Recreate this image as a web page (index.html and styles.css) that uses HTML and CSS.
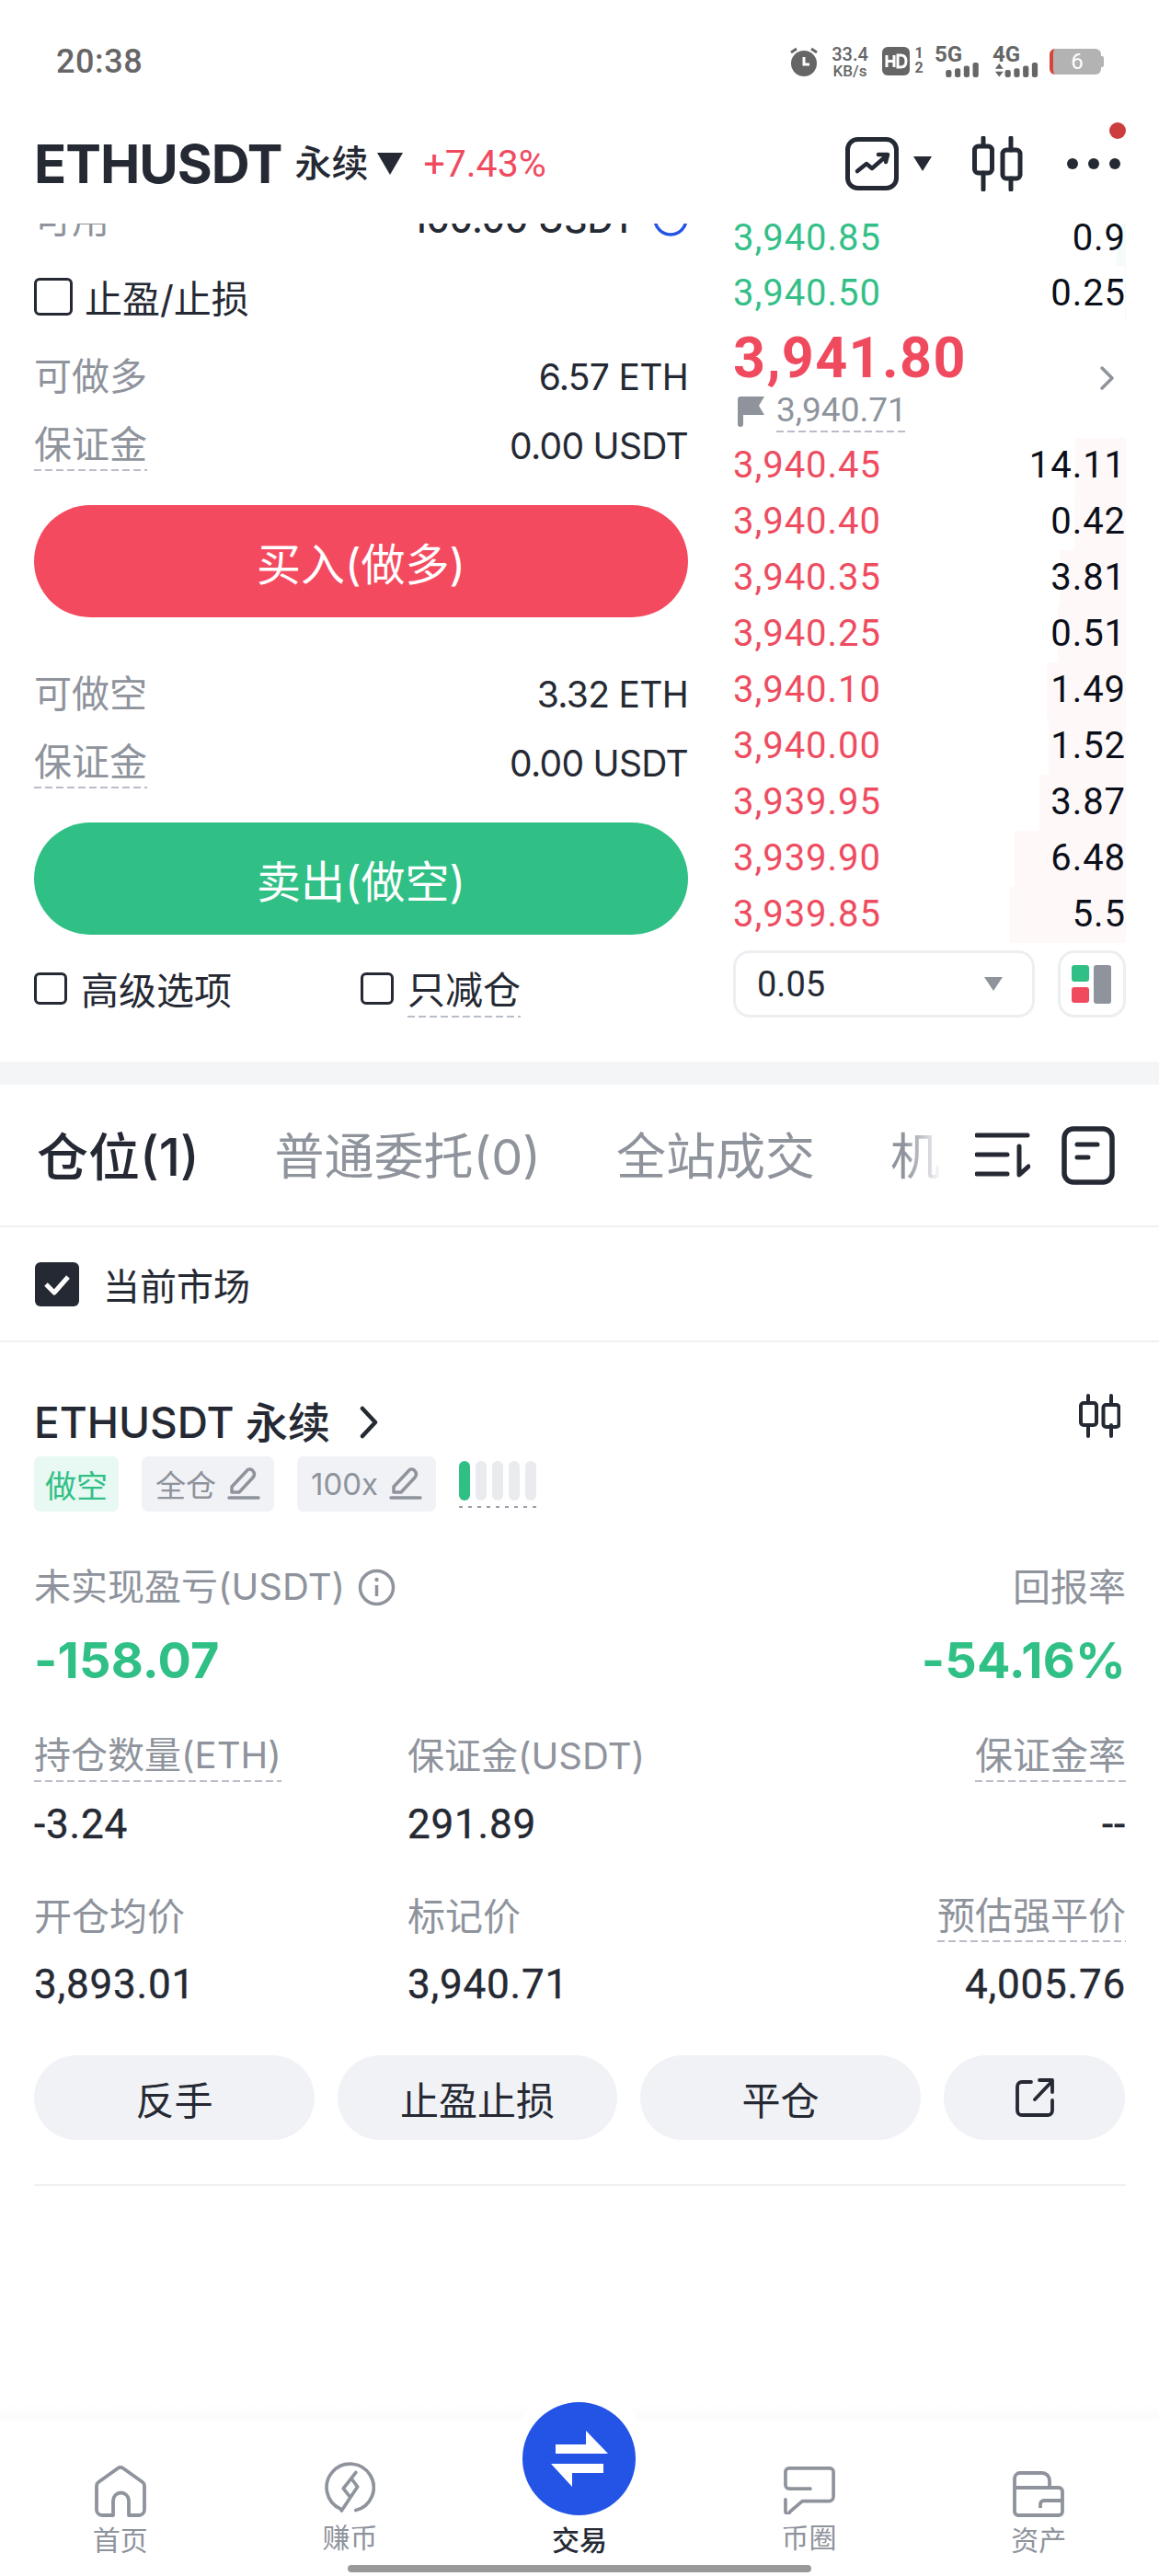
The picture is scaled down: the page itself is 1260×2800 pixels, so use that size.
FILE: index.html
```html
<!DOCTYPE html>
<html lang="zh-CN">
<head>
<meta charset="utf-8">
<title>ETHUSDT</title>
<link rel="stylesheet" href="styles.css">
</head>
<body>
<div class="page">
  <div class="status">
    <span class="time">20:38</span>
    <div class="sys">
      <svg class="i-alarm" viewBox="0 0 32 32"><circle cx="16" cy="18" r="14" fill="#666"/><path d="M16 11v8h6" fill="none" stroke="#fff" stroke-width="3"/><path d="M2 6l6-4M30 6l-6-4" stroke="#666" stroke-width="3"/></svg>
      <div class="speed"><span class="sp1">33.4</span><span class="sp2">KB/s</span></div>
      <svg class="i-hd" viewBox="0 0 30 31"><rect width="30" height="31" rx="6" fill="#666"/><path d="M5 9v13M13 9v13M5 15.500h8M17 9v13h3q6 0 6-6.500t-6-6.500z" fill="none" stroke="#fff" stroke-width="3"/></svg>
      <div class="sims"><span>1</span><span>2</span></div>
      <div class="net net5"><span class="net-t">5G</span><svg class="bars" viewBox="0 0 40 18"><rect y="9" width="7" height="9" rx="2.500"/><rect x="11" y="7" width="7" height="11" rx="2.500"/><rect x="22" y="4" width="7" height="14" rx="2.500"/><rect x="33" width="7" height="18" rx="2.500"/></svg></div>
      <div class="net net4"><span class="net-t">4G</span><svg class="bars2" viewBox="0 0 52 18"><path d="M0 7.500L5 1l5 6.500zM0 11h10l-5 6.500z"/><rect x="12" y="9" width="7" height="9" rx="2.500"/><rect x="23" y="7" width="7" height="11" rx="2.500"/><rect x="34" y="4" width="7" height="14" rx="2.500"/><rect x="45" width="7" height="18" rx="2.500"/></svg></div>
      <div class="battery"><span>6</span></div>
    </div>
  </div>

  <header class="head">
    <span class="sym">ETHUSDT</span>
    <span class="perp">永续</span>
    <span class="tri"></span>
    <span class="chg">+7.43%</span>
    <div class="head-tools">
      <svg class="i-chart" viewBox="0 0 58 58"><rect x="2.500" y="2.500" width="53" height="53" rx="11" fill="none" stroke="#252933" stroke-width="5"/><path d="M13 37l10-8 6 5 15-13M36 19l10 0-2 8" fill="none" stroke="#252933" stroke-width="4.500" stroke-linecap="round" stroke-linejoin="round"/></svg>
      <span class="tri tri-sm"></span>
      <svg class="i-candle" viewBox="0 0 56 60"><g fill="none" stroke="#252933" stroke-width="5" stroke-linecap="round"><path d="M13 2v8M13 40v18M43 2v13M43 46v12"/><rect x="3.500" y="11" width="19" height="29" rx="4"/><rect x="34" y="15" width="19" height="31" rx="4"/></g></svg>
      <div class="dots"><i></i><i></i><i></i><b class="reddot"></b></div>
    </div>
  </header>

  <section class="trade">
    <div class="form">
      <div class="row clipped"><span class="lbl">可用</span><span class="avail">100.00 USDT<svg class="i-plus" viewBox="0 0 38 38"><circle cx="19" cy="19" r="17" fill="none" stroke="#2354e6" stroke-width="3.500"/></svg></span></div>
      <label class="check-row tpsl"><span class="box box-lg"></span>止盈/止损</label>
      <div class="group">
        <div class="row"><span class="lbl">可做多</span><span class="val">6.57 ETH</span></div>
        <div class="row"><span class="lbl dash">保证金</span><span class="val">0.00 USDT</span></div>
      </div>
      <button class="cta buy">买入(做多)</button>
      <div class="group group2">
        <div class="row"><span class="lbl">可做空</span><span class="val">3.32 ETH</span></div>
        <div class="row"><span class="lbl dash">保证金</span><span class="val">0.00 USDT</span></div>
      </div>
      <button class="cta sell">卖出(做空)</button>
      <div class="opts">
        <label class="check-row opt1"><span class="box"></span>高级选项</label>
        <label class="check-row"><span class="box"></span><span class="dash">只减仓</span></label>
      </div>
    </div>

    <div class="book">
      <div class="bk-row up"><i class="bar bar-g" style="width:10px"></i><span class="p">3,940.85</span><span class="q">0.9</span></div>
      <div class="bk-row up"><i class="bar bar-g" style="width:1px"></i><span class="p">3,940.50</span><span class="q">0.25</span></div>
      <div class="mid">
        <div class="last">3,941.80</div>
        <div class="mark">
          <svg class="i-flag" viewBox="0 0 29 33"><path d="M0 3a3 3 0 0 1 3-3h26l-6 10 6 10H6v10a3 3 0 0 1-6 0z" fill="#8e939c"/></svg>
          <span class="dash mark-v">3,940.71</span>
        </div>
        <svg class="i-more" viewBox="0 0 18 28"><path d="M3 3l11 11L3 25" fill="none" stroke="#8e939c" stroke-width="3.500" stroke-linecap="round" stroke-linejoin="round"/></svg>
      </div>
      <div class="bk-row dn"><i class="bar" style="width:55px"></i><span class="p">3,940.45</span><span class="q">14.11</span></div>
      <div class="bk-row dn"><i class="bar" style="width:56px"></i><span class="p">3,940.40</span><span class="q">0.42</span></div>
      <div class="bk-row dn"><i class="bar" style="width:72px"></i><span class="p">3,940.35</span><span class="q">3.81</span></div>
      <div class="bk-row dn"><i class="bar" style="width:74px"></i><span class="p">3,940.25</span><span class="q">0.51</span></div>
      <div class="bk-row dn"><i class="bar" style="width:86px"></i><span class="p">3,940.10</span><span class="q">1.49</span></div>
      <div class="bk-row dn"><i class="bar" style="width:84px"></i><span class="p">3,940.00</span><span class="q">1.52</span></div>
      <div class="bk-row dn"><i class="bar" style="width:94px"></i><span class="p">3,939.95</span><span class="q">3.87</span></div>
      <div class="bk-row dn"><i class="bar" style="width:121px"></i><span class="p">3,939.90</span><span class="q">6.48</span></div>
      <div class="bk-row dn"><i class="bar" style="width:126px"></i><span class="p">3,939.85</span><span class="q">5.5</span></div>
      <div class="bk-ctrl">
        <div class="select"><span>0.05</span><i class="caret"></i></div>
        <div class="layout-btn"><div class="lb-col"><i class="lb-g"></i><i class="lb-r"></i></div><i class="lb-s"></i></div>
      </div>
    </div>
  </section>

  <div class="band"></div>

  <nav class="tabs">
    <div class="tab-list">
      <span class="tab on">仓位(1)</span>
      <span class="tab">普通委托(0)</span>
      <span class="tab">全站成交</span>
      <span class="tab fade">机构</span>
    </div>
    <svg class="i-sort" viewBox="0 0 60 50"><path d="M2 3h55M2 24h33M2 45h33M48 15v31l10-9" fill="none" stroke="#252933" stroke-width="5" stroke-linecap="round" stroke-linejoin="round"/></svg>
    <svg class="i-note" viewBox="0 0 58 64"><rect x="3" y="3" width="52" height="58" rx="10" fill="none" stroke="#252933" stroke-width="5.500"/><path d="M17 20h22M17 34h12" fill="none" stroke="#252933" stroke-width="5" stroke-linecap="round"/></svg>
  </nav>

  <label class="market"><span class="box-on"><svg viewBox="0 0 48 48"><path d="M12 24l9 9 15-17" fill="none" stroke="#fff" stroke-width="5" stroke-linejoin="round"/></svg></span>当前市场</label>

  <article class="pos">
    <div class="pos-title">
      <span class="pos-name">ETHUSDT 永续</span>
      <svg class="i-chev" viewBox="0 0 20 36"><path d="M3 3l14 15L3 33" fill="none" stroke="#252933" stroke-width="4.500" stroke-linecap="round" stroke-linejoin="round"/></svg>
      <svg class="i-candle-sm" viewBox="0 0 45 48"><g fill="none" stroke="#252933" stroke-width="4" stroke-linecap="round"><path d="M10 2v8M10 34v12M35 2v8M35 34v12"/><rect x="2" y="10" width="17" height="24" rx="3"/><rect x="26.500" y="12" width="17" height="24" rx="3"/></g></svg>
    </div>
    <div class="tags">
      <span class="tag tag-g">做空</span>
      <span class="tag">全仓<svg class="i-pen" viewBox="0 0 36 36"><path d="M5 21L21 4a4 4 0 0 1 7 0q3 3 0 7L13 27H5zM2 33h32" fill="none" stroke="#8e939c" stroke-width="3.500" stroke-linejoin="round" stroke-linecap="round"/></svg></span>
      <span class="tag">100x<svg class="i-pen" viewBox="0 0 36 36"><path d="M5 21L21 4a4 4 0 0 1 7 0q3 3 0 7L13 27H5zM2 33h32" fill="none" stroke="#8e939c" stroke-width="3.500" stroke-linejoin="round" stroke-linecap="round"/></svg></span>
      <span class="lev"><i class="on"></i><i></i><i></i><i></i><i></i></span>
    </div>
    <div class="pnl-head">
      <span class="lbl mix">未实现盈亏(USDT)</span>
      <svg class="i-info" viewBox="0 0 41 41"><circle cx="20.500" cy="20.500" r="18" fill="none" stroke="#8e939c" stroke-width="3.500"/><path d="M20.500 18v12" stroke="#8e939c" stroke-width="3.500"/><circle cx="20.500" cy="12" r="2.200" fill="#8e939c"/></svg>
      <span class="lbl pnl-r">回报率</span>
    </div>
    <div class="pnl-vals"><span>-158.07</span><span>-54.16%</span></div>
    <div class="stats s1">
      <span class="lbl mix dash">持仓数量(ETH)</span><span class="lbl mix">保证金(USDT)</span><span class="lbl dash end">保证金率</span>
      <span class="num">-3.24</span><span class="num">291.89</span><span class="num end">--</span>
    </div>
    <div class="stats s2">
      <span class="lbl">开仓均价</span><span class="lbl">标记价</span><span class="lbl dash end">预估强平价</span>
      <span class="num">3,893.01</span><span class="num">3,940.71</span><span class="num end">4,005.76</span>
    </div>
    <div class="actions">
      <button class="act">反手</button>
      <button class="act">止盈止损</button>
      <button class="act">平仓</button>
      <button class="act"><svg class="i-share" viewBox="0 0 44 44"><path d="M18 5H8a5 5 0 0 0-5 5v26a5 5 0 0 0 5 5h28a5 5 0 0 0 5-5V25M41 4L22 24M27 3h14v13" fill="none" stroke="#252933" stroke-width="3.800" stroke-linecap="round" stroke-linejoin="round"/></svg></button>
    </div>
    <div class="rule"></div>
  </article>

  <footer class="nav">
    <div class="hump"></div>
    <div class="fab"><svg viewBox="0 0 123 123"><path d="M36 46H69V31L93 56H36zM88 77H54V92L31 67H88z" fill="#fff"/></svg></div>
    <div class="nav-item">
      <svg class="i-nav" viewBox="0 0 56 56"><path d="M37 54h11a6 6 0 0 0 6-6V22a5 5 0 0 0-2-4L31 3a5 5 0 0 0-6 0L4 18a5 5 0 0 0-2 4v26a6 6 0 0 0 6 6h12V38a8 8 0 0 1 17 0z" fill="none" stroke="#8e939c" stroke-width="3.800" stroke-linejoin="round"/></svg>
      <span>首页</span>
    </div>
    <div class="nav-item hi">
      <svg class="i-nav" viewBox="0 0 58 60"><path d="M19 54A26.500 26.500 0 1 1 36 55.500M36 13L22 31l8 10 8-12-6-8M30 41L20 56" fill="none" stroke="#8e939c" stroke-width="3.800" stroke-linecap="round" stroke-linejoin="round"/></svg>
      <span>赚币</span>
    </div>
    <div class="nav-item cur"><span>交易</span></div>
    <div class="nav-item hi">
      <svg class="i-nav" viewBox="0 0 58 54"><path d="M30 25H6a4 4 0 0 1-4-4V6a4 4 0 0 1 4-4h46a4 4 0 0 1 4 4v28a5 5 0 0 1-5 5H21L7 51a2.500 2.500 0 0 1-5-1V37" fill="none" stroke="#8e939c" stroke-width="3.800" stroke-linecap="round" stroke-linejoin="round"/></svg>
      <span>币圈</span>
    </div>
    <div class="nav-item">
      <svg class="i-nav" viewBox="0 0 56 50"><path d="M2 18v26a4 4 0 0 0 4 4h44a4 4 0 0 0 4-4V22a4 4 0 0 0-4-4H2V8a6 6 0 0 1 6-6h24a8 8 0 0 1 8 8v8M54 32H34a4 4 0 0 0-4 4v4" fill="none" stroke="#8e939c" stroke-width="3.800" stroke-linejoin="round"/></svg>
      <span>资产</span>
    </div>
    <div class="home-bar"></div>
  </footer>
</div>
</body>
</html>
```

FILE: styles.css
```css
* { box-sizing: border-box; }
html, body { margin: 0; padding: 0; background: #fff; }
body { font-family: Inter, "Noto Sans CJK SC", sans-serif; color: #252933; }
button { font: inherit; border: 0; padding: 0; }
i { display: block; }
.page { position: relative; width: 1260px; height: 2800px; overflow: hidden; display: flex; flex-direction: column; background: #fff; }

.status { height: 132px; flex: none; display: flex; align-items: flex-start; justify-content: space-between; padding: 45px 63px 0 61px; }
.time { font: 500 36px/44px Roboto, sans-serif; color: #666; letter-spacing: .6px; }
.sys { display: flex; align-items: flex-start; color: #666; margin-top: 5px; }
.i-alarm { width: 32px; height: 32px; margin: 1px 12px 0 0; }
.speed { display: flex; flex-direction: column; align-items: center; width: 44px; margin-right: 13px; font-family: Roboto, sans-serif; font-weight: 500; }
.sp1 { font-size: 20px; line-height: 19px; }
.sp2 { font-size: 17px; line-height: 17px; }
.i-hd { width: 30px; height: 31px; margin-top: 1px; }
.sims { width: 14px; margin: 0 10px 0 3px; display: flex; flex-direction: column; font: 700 16px/16px Roboto, sans-serif; text-align: center; }
.net { display: flex; flex-direction: column; height: 34px; position: relative; }
.net-t { font: 700 24px/18px Roboto, sans-serif; }
.net5 { width: 50px; margin-right: 13px; }
.bars { width: 40px; height: 18px; align-self: flex-end; fill: #666; }
.net4 { width: 52px; margin-right: 10px; }
.bars2 { width: 52px; height: 18px; fill: #666; }
.battery { width: 56px; height: 28px; margin-top: 3px; background: #b3b3b3; border-left: 4px solid #d9443a; border-radius: 6px; color: #fff; font: 400 24px/28px Roboto, sans-serif; text-align: center; position: relative; }
.battery::after { content: ""; position: absolute; right: -3px; top: 8px; width: 3px; height: 12px; background: #b3b3b3; border-radius: 0 2px 2px 0; }

.head { height: 111px; flex: none; display: flex; align-items: center; padding: 0 42px 19px 37px; }
.sym { font-size: 58px; font-weight: 700; letter-spacing: -1px; line-height: 60px; }
.perp { font-size: 40px; font-weight: 500; margin-left: 14px; line-height: 60px; }
.tri { width: 0; height: 0; border-left: 14px solid transparent; border-right: 14px solid transparent; border-top: 24px solid #252933; margin-left: 10px; }
.chg { font-size: 41px; color: #f04a5f; margin-left: 22px; font-family: Roboto, sans-serif; }
.head-tools { margin-left: auto; display: flex; align-items: center; position: relative; }
.i-chart { width: 58px; height: 58px; margin-right: 16px; }
.tri-sm { border-left-width: 10px; border-right-width: 10px; border-top-width: 16px; margin: 0 43px 0 0; }
.i-candle { width: 56px; height: 60px; margin-right: 48px; }
.dots { display: flex; gap: 11px; position: relative; }
.dots i { width: 12px; height: 12px; border-radius: 50%; background: #252933; }
.reddot { position: absolute; right: -6px; top: -39px; width: 18px; height: 18px; border-radius: 50%; background: #cc3d3d; }

.trade { height: 911px; flex: none; display: flex; overflow: hidden; padding: 0 36px 0 37px; justify-content: space-between; }
.form { width: 711px; flex: none; }
.row { display: flex; align-items: center; justify-content: space-between; height: 60px; }
.lbl { font-size: 41px; color: #8e939c; line-height: 52px; white-space: nowrap; }
.lbl.mix { font-size: 40px; }
.val { font-size: 39px; font-weight: 400; letter-spacing: -.7px; }
.dash { display: inline-block; justify-self: start; padding-bottom: 3px; background: repeating-linear-gradient(90deg, #b9bdc7 0 8px, transparent 8px 12px) left bottom / 100% 2px no-repeat; }
.clipped { height: 56px; margin-top: -33px; }
.avail { display: flex; align-items: center; gap: 19px; font-size: 39px; font-weight: 500; }
.i-plus { width: 38px; height: 38px; }
.check-row { display: flex; align-items: center; font-size: 41px; height: 60px; white-space: nowrap; }
.tpsl { margin-top: 26px; }
.box { width: 36px; height: 35px; border: 3px solid #252933; border-radius: 6px; margin-right: 15px; flex: none; }
.box-lg { width: 42px; height: 41px; margin-right: 13px; }
.group { margin-top: 27px; display: flex; flex-direction: column; gap: 15px; }
.group2 { margin-top: 53px; }
.cta { display: block; width: 100%; height: 122px; margin-top: 35px; border-radius: 61px; color: #fff; font-size: 48px; }
.buy { background: #f44a60; }
.sell { background: #30c086; }
.opts { display: flex; margin-top: 28px; }
.opt1 { width: 355px; }

.book { width: 427px; flex: none; margin-top: -14px; font-family: Roboto, sans-serif; }
.bk-row { position: relative; height: 60px; display: flex; align-items: center; justify-content: space-between; font-size: 40px; letter-spacing: .95px; padding-bottom: 2px; }
.dn { height: 61px; }
.p { position: relative; }
.q { position: relative; color: #0b0f1a; }
.up .p { color: #34bf88; }
.dn .p { color: #ee4c60; }
.bar { position: absolute; right: 0; top: 0; bottom: 0; background: #fef8f8; }
.bar-g { background: #f4fbf8; }
.mid { height: 127px; position: relative; }
.last { font-size: 61px; font-weight: 700; color: #f04a5f; line-height: 72px; padding-top: 4px; letter-spacing: 1.4px; }
.mark { display: flex; align-items: center; height: 42px; margin-top: 1px; padding-left: 5px; }
.i-flag { width: 29px; height: 33px; margin-right: 13px; }
.mark-v { font-size: 37px; color: #8e939c; line-height: 42px; }
.i-more { position: absolute; right: 11px; top: 48px; width: 18px; height: 28px; }
.bk-ctrl { display: flex; justify-content: space-between; margin-top: 8px; }
.select { width: 328px; height: 73px; border: 3px solid #eceef1; border-radius: 18px; display: flex; align-items: center; justify-content: space-between; padding: 0 32px 0 23px; font-size: 38px; color: #252933; }
.caret { width: 0; height: 0; border-left: 10px solid transparent; border-right: 10px solid transparent; border-top: 15px solid #8e939c; }
.layout-btn { width: 74px; height: 73px; border: 3px solid #eceef1; border-radius: 18px; display: flex; gap: 5px; padding: 13px 12px; }
.lb-col { display: flex; flex-direction: column; gap: 6px; }
.lb-g, .lb-r { width: 19px; height: 18px; border-radius: 3px; background: #30c086; }
.lb-r { background: #f04a5f; }
.lb-s { width: 19px; height: 42px; border-radius: 3px; background: #8e939c; }

.band { height: 25px; flex: none; background: #f4f5f7; }
.tabs { height: 155px; flex: none; display: flex; align-items: center; padding: 0 48px 0 40px; border-bottom: 2px solid #eff0f2; }
.tab-list { width: 990px; flex: none; display: flex; gap: 82px; overflow: hidden; padding-top: 5px; }
.tab { font-size: 54px; color: #8e939c; line-height: 72px; white-space: nowrap; }
.tab.on { color: #252933; font-size: 56px; font-weight: 500; }
.fade { flex: none; width: 60px; background: linear-gradient(90deg, #8e939c 25%, #fff 95%); -webkit-background-clip: text; background-clip: text; color: transparent; overflow: hidden; }
.i-sort { width: 60px; height: 50px; margin: 0 34px 0 30px; flex: none; }
.i-note { width: 58px; height: 64px; flex: none; }

.market { height: 125px; flex: none; display: flex; align-items: center; padding-left: 38px; font-size: 40px; border-bottom: 2px solid #eff0f2; }
.box-on { width: 48px; height: 48px; border-radius: 6px; background: #252933; margin-right: 26px; }
.box-on svg { display: block; width: 48px; height: 48px; }

.pos { padding: 0 36px 0 37px; flex: none; }
.pos-title { display: flex; align-items: center; height: 60px; margin-top: 57px; position: relative; }
.pos-name { font-size: 46px; font-weight: 500; line-height: 60px; }
.i-chev { width: 20px; height: 36px; margin-left: 32px; }
.i-candle-sm { width: 45px; height: 48px; position: absolute; right: 6px; top: -1px; }
.tags { display: flex; align-items: center; margin-top: 6px; height: 62px; }
.tag { display: flex; align-items: center; height: 60px; padding: 0 15px; gap: 12px; border-radius: 7px; background: #f1f2f6; color: #8e939c; font-size: 33px; margin-right: 25px; }
.tag-g { background: #e8f8f2; color: #30c086; width: 92px; justify-content: center; padding: 0; font-size: 34px; }
.i-pen { width: 36px; height: 36px; }
.lev { display: flex; gap: 6px; padding-bottom: 8px; background: repeating-linear-gradient(90deg, #9a9ea8 0 4px, transparent 4px 10px) left bottom / 100% 2px no-repeat; }
.lev i { width: 12px; height: 43px; border-radius: 6px; background: #e9ebef; }
.lev i.on { background: #30c086; }
.pnl-head { display: flex; align-items: center; margin-top: 55px; height: 52px; }
.i-info { width: 41px; height: 41px; margin-left: 14px; }
.pnl-r { margin-left: auto; }
.pnl-vals { display: flex; justify-content: space-between; margin-top: 24px; font-size: 54px; font-weight: 700; letter-spacing: .2px; color: #30c086; line-height: 60px; }
.stats { display: grid; grid-template-columns: 406px 1fr auto; align-items: center; }
.s1 { margin-top: 46px; grid-template-rows: 56px 60px; row-gap: 16px; }
.s2 { margin-top: 42px; grid-template-rows: 56px 60px; row-gap: 16px; }
.end { justify-self: end; }
.num { font-size: 44px; font-weight: 400; line-height: 60px; font-family: Roboto, sans-serif; letter-spacing: .8px; -webkit-text-stroke: .4px #252933; }
.actions { display: grid; grid-template-columns: 305px 304px 305px 197px; column-gap: 25px; margin-top: 47px; }
.act { height: 92px; border-radius: 46px; background: #f1f2f6; color: #252933; font-size: 42px; display: flex; align-items: center; justify-content: center; }
.i-share { width: 44px; height: 44px; }
.rule { height: 2px; background: #eff0f2; margin-top: 48px; }

.nav { position: absolute; left: 0; right: 0; bottom: 0; height: 170px; background: #fff; display: grid; grid-template-columns: repeat(5, 1fr); padding: 0 6px; }
.nav::before { content: ""; position: absolute; left: 0; right: 0; top: -18px; height: 18px; background: linear-gradient(#fff, #fbfbfc); }
.hump { position: absolute; left: 550px; top: -33px; width: 160px; height: 90px; border-radius: 80px 80px 0 0; background: #fff; }
.fab { position: absolute; left: 568px; top: -19px; width: 123px; height: 123px; border-radius: 50%; background: #2354e6; }
.fab svg { display: block; width: 123px; height: 123px; }
.nav-item { position: relative; display: flex; flex-direction: column; align-items: center; justify-content: flex-end; padding-bottom: 21px; font-size: 30px; line-height: 36px; color: #8e939c; }
.nav-item.hi { padding-bottom: 24px; }
.nav-item.cur { color: #252933; font-weight: 500; }
.i-nav { display: block; width: 56px; height: auto; margin-bottom: 7px; }
.home-bar { position: absolute; left: 378px; bottom: 4px; width: 504px; height: 8px; border-radius: 4px; background: #999; }
```
